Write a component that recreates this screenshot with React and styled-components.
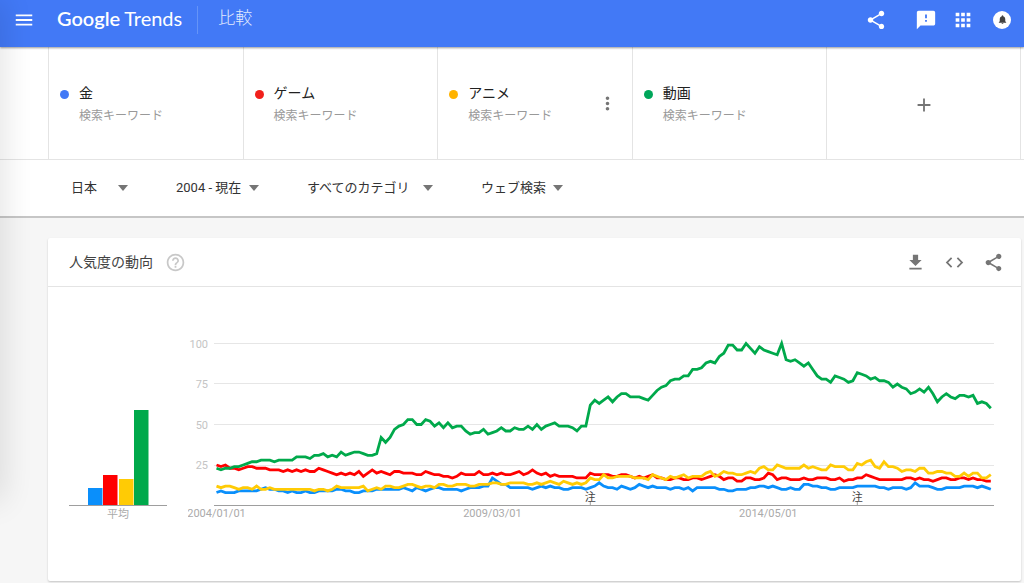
import React from 'react';
import styled, { createGlobalStyle } from 'styled-components';
import {
  MdMenu,
  MdShare,
  MdFeedback,
  MdApps,
  MdNotifications,
  MdMoreVert,
  MdAdd,
  MdHelpOutline,
  MdFileDownload,
  MdCode,
} from 'react-icons/md';

const GlobalStyle = createGlobalStyle`
  * {
    box-sizing: border-box;
  }

  body {
    margin: 0;
    background-color: #f6f6f6;
    font-family: Roboto, 'Noto Sans CJK JP', sans-serif;
    color: #212121;
  }
`;

const DrawerEdge = styled.div`
  position: fixed;
  top: 0;
  left: -20px;
  width: 20px;
  height: 500px;
  box-shadow: 0 0 32px rgba(0, 0, 0, 0.16);
  z-index: 3;
`;

const TopBar = styled.header`
  display: flex;
  align-items: center;
  height: 47px;
  padding: 0 13px 8px 13px;
  background-color: #4279f6;
  color: white;
  box-shadow: 0 1px 2px rgba(0, 0, 0, 0.4);
  position: relative;
  z-index: 2;
`;

const IconButton = styled.button`
  display: flex;
  align-items: center;
  justify-content: center;
  padding: 0;
  border: none;
  background: none;
  color: ${({ color }) => color || '#757575'};
  cursor: pointer;
`;

const Logo = styled.a`
  display: flex;
  gap: 4px;
  margin-left: 22px;
  padding-bottom: 4px;
  color: white;
  font-family: Lato, sans-serif;
  font-size: 20px;
  line-height: 24px;
  text-decoration: none;
`;

const LogoStrong = styled.span`
  font-weight: 600;
`;

const PageName = styled.h1`
  margin: 0 auto 0 15px;
  padding: 0 0 4px 20px;
  border-left: 1px solid #6594f8;
  color: #e3ebfe;
  font-size: 17px;
  font-weight: 300;
  line-height: 24px;
`;

const TopActions = styled.div`
  display: flex;
  align-items: center;
  gap: 15px;
`;

const ShareSlot = styled.div`
  margin-right: 13px;
`;

const Avatar = styled.span`
  display: flex;
  align-items: center;
  justify-content: center;
  width: 18px;
  height: 18px;
  margin-left: 4px;
  border-radius: 50%;
  background-color: white;
  color: #424242;
`;

const Terms = styled.section`
  display: grid;
  grid-template-columns: repeat(5, 1fr);
  height: 113px;
  padding: 0 3px 0 48px;
  background-color: white;
  border-bottom: 1px solid #e4e4e4;
`;

const Term = styled.div`
  display: flex;
  padding: 35px 14px 0 11px;
  border-left: 1px solid #e4e4e4;
`;

const Dot = styled.span`
  width: 9px;
  height: 9px;
  margin: 8px 10px 0 0;
  border-radius: 50%;
  background-color: ${({ color }) => color};
`;

const TermText = styled.div`
  flex: 1;
`;

const TermName = styled.div`
  font-size: 14px;
  line-height: 22px;
`;

const TermType = styled.div`
  color: #999;
  font-size: 12px;
  line-height: 24px;
`;

const TermMenu = styled(IconButton)`
  height: 42px;
`;

const AddTerm = styled(IconButton)`
  padding-top: 4px;
  border-left: 1px solid #e4e4e4;
  border-right: 1px solid #e4e4e4;
`;

const Filters = styled.form`
  display: flex;
  align-items: center;
  gap: 48px;
  height: 58px;
  padding-left: 71px;
  background-color: white;
  border-bottom: 2px solid #c6c6c6;
`;

const Filter = styled.label`
  display: flex;
  align-items: center;
`;

const Select = styled.select`
  appearance: none;
  width: ${({ $width }) => $width}px;
  padding: 0;
  border: none;
  background: none;
  color: #333;
  font-family: inherit;
  font-size: 13px;
  line-height: 20px;
`;

const Caret = styled.span`
  border: 5px solid transparent;
  border-top: 6px solid #757575;
  border-bottom: none;
`;

const Card = styled.section`
  margin: 20px 3px 2px 48px;
  background-color: white;
  border-radius: 2px;
  box-shadow: 0 1px 2px rgba(0, 0, 0, 0.2);
`;

const CardHeader = styled.header`
  display: flex;
  align-items: center;
  height: 49px;
  padding: 0 17px 0 21px;
  border-bottom: 1px solid #e4e4e4;
`;

const CardTitle = styled.h2`
  margin: 0 12px 0 0;
  padding-bottom: 2px;
  color: #424242;
  font-size: 14px;
  font-weight: 400;
`;

const CardActions = styled.div`
  display: flex;
  gap: 18px;
  margin-left: auto;
`;

const CardBody = styled.div`
  display: flex;
  align-items: flex-start;
  gap: 21px;
  padding: 47px 27px 57px 21px;
`;

const BarSvg = styled.svg`
  width: 98px;
  height: 190px;
  flex: none;
`;

const LineSvg = styled.svg`
  flex: 1;
  min-width: 0;
`;

const AxisText = styled.text`
  fill: ${({ $dark }) => ($dark ? '#aaa' : '#c4c4c4')};
  font-size: 11px;
`;

const NoteText = styled.text`
  fill: #444;
  font-size: 11px;
`;

const terms = [
  { name: '金', color: '#4279f6' },
  { name: 'ゲーム', color: '#f1201b' },
  { name: 'アニメ', color: '#ffb300', menu: true },
  { name: '動画', color: '#00a65a' },
];

const filters = [
  { label: '地域', value: '日本', width: 47 },
  { label: '期間', value: '2004 - 現在', width: 73 },
  { label: 'カテゴリ', value: 'すべてのカテゴリ', width: 116 },
  { label: '検索の種類', value: 'ウェブ検索', width: 72 },
];

const averages = [
  { x: 19, height: 17, color: '#0a8ffb' },
  { x: 34, height: 30, color: '#ff0000' },
  { x: 50, height: 26, color: '#ffcb05' },
  { x: 65, height: 95, color: '#00a94b' },
];

// monthly values, january 2004 onwards
const series = [
  {
    color: '#0a8ffb',
    values: [
      8, 9, 8, 8, 8, 9, 9, 9, 9, 9, 10, 11, 10, 10, 9, 9, 8, 9, 8, 8, 9, 8, 8, 9, 9,
      9, 9, 10, 10, 9, 9, 8, 8, 9, 9, 9, 10, 10, 10, 10, 10, 10, 11, 10, 9, 11, 10, 9, 10, 11,
      11, 10, 10, 10, 10, 9, 10, 11, 11, 11, 12, 12, 17, 15, 13, 13, 11, 11, 11, 11, 11, 10, 11, 12, 11,
      12, 11, 11, 10, 10, 11, 11, 11, 10, 11, 12, 14, 12, 11, 11, 10, 12, 11, 10, 11, 13, 12, 11, 12, 11,
      11, 11, 10, 11, 11, 10, 11, 9, 11, 11, 11, 11, 11, 10, 10, 9, 9, 10, 10, 10, 11, 11, 12, 12, 11,
      12, 11, 10, 10, 11, 10, 10, 13, 13, 12, 12, 11, 11, 10, 10, 11, 11, 11, 11, 12, 12, 12, 12, 12, 11,
      11, 10, 11, 11, 11, 10, 11, 14, 12, 12, 12, 11, 10, 10, 11, 11, 11, 11, 12, 12, 12, 11, 12, 11, 10,
    ],
  },
  {
    color: '#ff0000',
    values: [
      25, 24, 25, 23, 23, 22, 23, 24, 24, 23, 23, 23, 22, 22, 22, 21, 22, 21, 22, 21, 22, 21, 21, 23, 22,
      21, 20, 19, 20, 19, 20, 19, 21, 18, 20, 22, 20, 21, 20, 19, 21, 21, 20, 20, 20, 19, 19, 21, 20, 19,
      19, 18, 18, 17, 18, 20, 19, 19, 19, 21, 19, 19, 20, 19, 20, 19, 19, 20, 21, 19, 20, 22, 20, 19, 20,
      18, 19, 18, 18, 18, 18, 17, 17, 17, 20, 19, 19, 19, 19, 18, 18, 19, 19, 18, 17, 18, 17, 18, 19, 17,
      17, 16, 16, 17, 17, 16, 16, 17, 17, 16, 17, 18, 19, 18, 16, 17, 17, 15, 15, 17, 17, 16, 16, 17, 20,
      19, 16, 17, 17, 16, 16, 16, 17, 16, 16, 17, 17, 17, 16, 16, 17, 15, 16, 16, 17, 17, 19, 18, 17, 16,
      16, 16, 16, 16, 16, 17, 17, 16, 17, 16, 16, 15, 16, 17, 17, 16, 16, 17, 17, 16, 17, 16, 16, 15, 15,
    ],
  },
  {
    color: '#ffcb05',
    values: [
      12, 11, 12, 12, 11, 10, 11, 11, 10, 12, 10, 10, 11, 10, 10, 10, 10, 10, 10, 10, 10, 10, 9, 10, 10,
      9, 10, 12, 11, 11, 11, 11, 11, 12, 9, 10, 11, 10, 12, 12, 11, 11, 12, 13, 13, 12, 11, 12, 12, 11,
      13, 13, 12, 12, 13, 13, 13, 12, 12, 13, 13, 13, 14, 14, 13, 13, 14, 14, 14, 14, 13, 13, 14, 13, 14,
      15, 14, 13, 15, 14, 13, 14, 13, 14, 17, 16, 16, 19, 17, 17, 18, 18, 18, 18, 17, 17, 17, 16, 19, 18,
      17, 16, 18, 17, 18, 19, 17, 18, 18, 18, 20, 21, 18, 19, 21, 20, 20, 19, 19, 20, 21, 20, 23, 24, 22,
      22, 25, 24, 23, 23, 23, 23, 25, 23, 24, 23, 22, 22, 25, 24, 24, 24, 22, 22, 26, 25, 27, 28, 24, 23,
      27, 24, 24, 23, 21, 22, 22, 21, 23, 23, 20, 20, 21, 21, 20, 20, 18, 18, 20, 18, 20, 20, 17, 17, 19,
    ],
  },
  {
    color: '#00a94b',
    values: [
      23, 22, 23, 23, 24, 24, 25, 26, 27, 27, 28, 28, 28, 27, 28, 28, 28, 28, 30, 30, 30, 29, 31, 31, 32,
      30, 31, 30, 33, 31, 32, 33, 33, 32, 31, 31, 32, 42, 39, 42, 47, 49, 50, 53, 53, 50, 50, 53, 52, 49,
      51, 48, 51, 48, 49, 49, 46, 44, 45, 45, 47, 44, 45, 46, 48, 46, 46, 48, 47, 47, 49, 47, 50, 47, 49,
      50, 51, 49, 49, 49, 48, 46, 49, 49, 62, 65, 63, 65, 67, 64, 67, 69, 69, 67, 67, 67, 66, 65, 68, 71,
      73, 74, 77, 78, 78, 80, 80, 84, 84, 85, 88, 89, 88, 92, 94, 99, 99, 96, 96, 100, 97, 94, 98, 96, 95,
      94, 93, 100, 90, 89, 90, 88, 86, 88, 84, 80, 78, 78, 76, 80, 79, 78, 76, 77, 82, 81, 80, 78, 79, 77,
      77, 76, 73, 75, 73, 72, 69, 70, 72, 70, 73, 69, 64, 67, 69, 67, 66, 68, 68, 67, 68, 63, 64, 63, 60,
    ],
  },
];

const grid = [100, 75, 50, 25];
const notes = [84, 144];
const dates = [
  { month: 0, label: '2004/01/01' },
  { month: 62, label: '2009/03/01' },
  { month: 124, label: '2014/05/01' },
];

const xOf = (month) => 28.5 + month * 4.45;
const yOf = (value) => 171.5 - value * 1.62;

const toPoints = (values) =>
  values.map((v, i) => `${xOf(i).toFixed(2)},${yOf(v).toFixed(2)}`).join(' ');

const AverageChart = () => (
  <BarSvg viewBox="0 0 98 190" role="img" aria-label="平均">
    {averages.map((bar) => (
      <rect key={bar.x} x={bar.x} y={171 - bar.height} width="14.5" height={bar.height} fill={bar.color} />
    ))}
    <path d="M0 171.5H98" stroke="#9e9e9e" />
    <AxisText $dark x="49" y="184" textAnchor="middle">平均</AxisText>
  </BarSvg>
);

const TrendChart = () => (
  <LineSvg viewBox="0 0 806 190" role="img" aria-label="人気度の動向">
    {grid.map((value) => (
      <g key={value}>
        <path d={`M26 ${Math.floor(yOf(value)) + 0.5}H806`} stroke="#e6e6e6" />
        <AxisText x="20" y={yOf(value) + 4} textAnchor="end">{value}</AxisText>
      </g>
    ))}
    <path d="M26 171.5H806" stroke="#9e9e9e" />
    {series.map((line) => (
      <polyline
        key={line.color}
        points={toPoints(line.values)}
        fill="none"
        stroke={line.color}
        strokeWidth="2.8"
      />
    ))}
    {notes.map((month) => (
      <g key={month}>
        <path d={`M${xOf(month)} 167V171`} stroke="#9e9e9e" />
        <NoteText x={xOf(month)} y="167" textAnchor="middle">注</NoteText>
      </g>
    ))}
    {dates.map((date) => (
      <AxisText key={date.label} $dark x={xOf(date.month)} y="183" textAnchor="middle">
        {date.label}
      </AxisText>
    ))}
  </LineSvg>
);

const App = () => {
  return (
    <>
      <GlobalStyle />
      <DrawerEdge />
      <TopBar>
        <IconButton color="white" aria-label="メニュー"><MdMenu size={22} /></IconButton>
        <Logo href="#">
          <LogoStrong>Google</LogoStrong>
          <span>Trends</span>
        </Logo>
        <PageName>比較</PageName>
        <TopActions>
          <ShareSlot>
            <IconButton color="white" aria-label="共有"><MdShare size={22} /></IconButton>
          </ShareSlot>
          <IconButton color="white" aria-label="フィードバック"><MdFeedback size={22} /></IconButton>
          <IconButton color="white" aria-label="アプリ"><MdApps size={22} /></IconButton>
          <IconButton color="white" aria-label="通知">
            <Avatar><MdNotifications size={11} /></Avatar>
          </IconButton>
        </TopActions>
      </TopBar>

      <main>
        <Terms>
          {terms.map((term) => (
            <Term key={term.name}>
              <Dot color={term.color} />
              <TermText>
                <TermName>{term.name}</TermName>
                <TermType>検索キーワード</TermType>
              </TermText>
              {term.menu && (
                <TermMenu aria-label="その他"><MdMoreVert size={21} /></TermMenu>
              )}
            </Term>
          ))}
          <AddTerm aria-label="比較を追加"><MdAdd size={22} /></AddTerm>
        </Terms>

        <Filters>
          {filters.map((filter) => (
            <Filter key={filter.label}>
              <Select $width={filter.width} aria-label={filter.label}>
                <option>{filter.value}</option>
              </Select>
              <Caret />
            </Filter>
          ))}
        </Filters>

        <Card>
          <CardHeader>
            <CardTitle>人気度の動向</CardTitle>
            <IconButton color="#c8c8c8" aria-label="ヘルプ"><MdHelpOutline size={21} /></IconButton>
            <CardActions>
              <IconButton aria-label="ダウンロード"><MdFileDownload size={21} /></IconButton>
              <IconButton aria-label="埋め込み"><MdCode size={21} /></IconButton>
              <IconButton aria-label="共有"><MdShare size={21} /></IconButton>
            </CardActions>
          </CardHeader>
          <CardBody>
            <AverageChart />
            <TrendChart />
          </CardBody>
        </Card>
      </main>
    </>
  );
};

export default App;
